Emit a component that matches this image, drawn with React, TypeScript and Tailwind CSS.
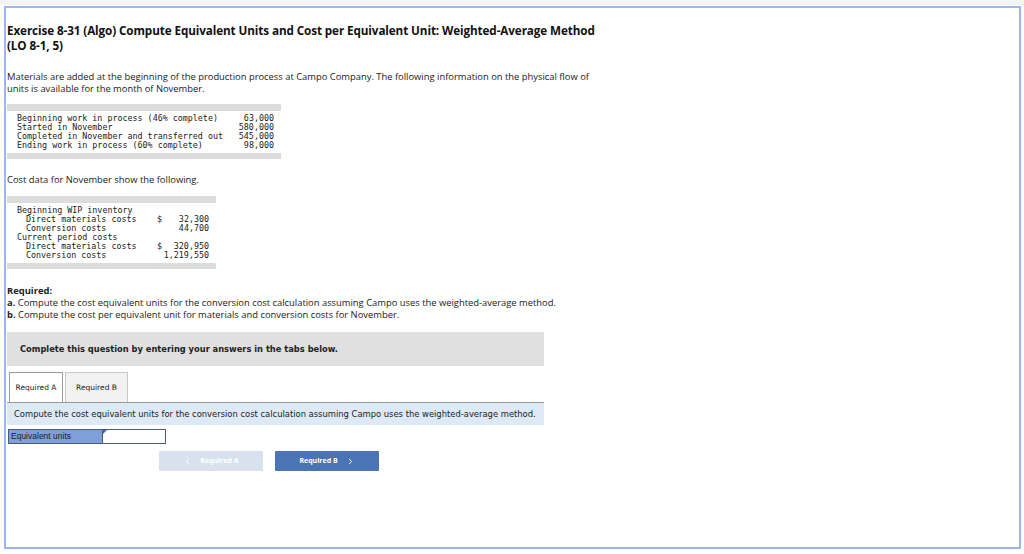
import React from 'react';
import { ChevronLeft, ChevronRight } from 'lucide-react';

// Exercise page from an online homework tool
const mono = { fontFamily: '"DejaVu Sans Mono", "Liberation Mono", monospace' };

export default function App() {
  const flow = [
    ['Beginning work in process (46% complete)', '63,000'],
    ['Started in November', '580,000'],
    ['Completed in November and transferred out', '545,000'],
    ['Ending work in process (60% complete)', '98,000'],
  ];

  return (
    <div className="w-[1024px] h-[554px] bg-white font-['Open_Sans','Liberation_Sans',sans-serif] text-[#222]">
      <div className="h-[5px] bg-[#f4f4f4]" />
      <div className="ml-[4px] mt-[1px] w-[1017px] h-[543px] border-2 border-[#9db5f2] pl-[1px]">
        <h1 className="mt-[15px] text-[11.7px] leading-[15px] font-bold text-[#111] w-[620px] tracking-[-0.1px]">
          Exercise 8-31 (Algo) Compute Equivalent Units and Cost per Equivalent Unit: Weighted-Average Method <br />(LO 8-1, 5)
        </h1>
        <p className="mt-[18px] text-[9.4px] leading-[12px] w-[620px]">
          Materials are added at the beginning of the production process at Campo Company. The following information on the physical flow of <br />units is available for the month of November.
        </p>

        {/* physical flow table */}
        <div className="mt-[9px] w-[274px] text-[8.35px] leading-[9px]" style={mono}>
          <div className="h-[7px] bg-[#dcdcdc]" />
          <div className="py-[3px] pl-[10px] pr-[7px]">
            {flow.map(([label, value]) => (
              <div key={label} className="flex justify-between">
                <span>{label}</span>
                <span>{value}</span>
              </div>
            ))}
          </div>
          <div className="h-[6px] bg-[#dcdcdc]" />
        </div>

        <p className="mt-[15px] text-[9.4px] leading-[12px]">Cost data for November show the following.</p>

        {/* cost table */}
        <div className="mt-[10px] w-[209px] text-[8.35px] leading-[9px]" style={mono}>
          <div className="h-[7px] bg-[#dcdcdc]" />
          <div className="py-[3px] pl-[10px] pr-[7px]">
            <div>Beginning WIP inventory</div>
            <div className="flex pl-[9px]">
              <span className="w-[131px]">Direct materials costs</span>
              <span className="w-[10px]">$</span>
              <span className="flex-1 text-right">32,300</span>
            </div>
            <div className="flex pl-[9px]">
              <span className="w-[131px]">Conversion costs</span>
              <span className="w-[10px]"></span>
              <span className="flex-1 text-right">44,700</span>
            </div>
            <div>Current period costs</div>
            <div className="flex pl-[9px]">
              <span className="w-[131px]">Direct materials costs</span>
              <span className="w-[10px]">$</span>
              <span className="flex-1 text-right">320,950</span>
            </div>
            <div className="flex pl-[9px]">
              <span className="w-[131px]">Conversion costs</span>
              <span className="w-[10px]"></span>
              <span className="flex-1 text-right">1,219,550</span>
            </div>
          </div>
          <div className="h-[6px] bg-[#dcdcdc]" />
        </div>

        <div className="mt-[16px] text-[9.4px] leading-[12px]">
          <div className="font-bold">Required:</div>
          <div><b>a.</b> Compute the cost equivalent units for the conversion cost calculation assuming Campo uses the weighted-average method.</div>
          <div><b>b.</b> Compute the cost per equivalent unit for materials and conversion costs for November.</div>
        </div>

        <div className="mt-[11px] w-[537px] h-[34px] bg-[#e0e0e0] flex items-center pl-[13px] text-[8.3px] font-bold font-['DejaVu_Sans','Liberation_Sans',sans-serif]">
          Complete this question by entering your answers in the tabs below.
        </div>

        {/* tabs */}
        <div className="mt-[6px] w-[537px] font-['DejaVu_Sans','Liberation_Sans',sans-serif]">
          <div className="flex pl-[2px] gap-[2px] border-b border-[#9a9a9a]">
            <div className="w-[54px] h-[30px] bg-white border border-b-0 border-[#9a9a9a] flex items-center justify-center text-[7.5px] -mb-px">
              Required A
            </div>
            <div className="w-[63px] h-[30px] bg-[#f2f2f2] border border-b-0 border-[#c8c8c8] flex items-center justify-center text-[7.5px]">
              Required B
            </div>
          </div>
          <div className="h-[22px] bg-[#dde9f5] flex items-center pl-[7px] text-[8.4px]">
            Compute the cost equivalent units for the conversion cost calculation assuming Campo uses the weighted-average method.
          </div>
          <div className="mt-[4px] ml-[1px] flex h-[15px] text-[8.5px] font-['Liberation_Sans',sans-serif]">
            <div className="w-[95px] bg-[#7f9fd8] border border-[#4a5a78] pl-[2px] flex items-center">Equivalent units</div>
            <div className="relative w-[63px] bg-white border border-l-0 border-[#4a5a78]">
              <span className="absolute left-0 top-0 w-0 h-0 border-t-[4px] border-r-[4px] border-t-[#3b6bc4] border-r-transparent" />
            </div>
          </div>
          <div className="mt-[7px] ml-[152px] flex gap-[12px] text-[7px] font-bold font-['Open_Sans','Liberation_Sans',sans-serif]">
            <div className="w-[104px] h-[20px] bg-[#d8e2ef] text-white flex items-center justify-center gap-[8px] rounded-[1px]">
              <ChevronLeft className="w-[9px] h-[9px]" strokeWidth={2.5} />
              <span>Required A</span>
            </div>
            <div className="w-[104px] h-[20px] bg-[#4a74b5] text-white flex items-center justify-center gap-[8px] rounded-[1px]">
              <span>Required B</span>
              <ChevronRight className="w-[9px] h-[9px]" strokeWidth={2.5} />
            </div>
          </div>
        </div>
      </div>
    </div>
  );
}
